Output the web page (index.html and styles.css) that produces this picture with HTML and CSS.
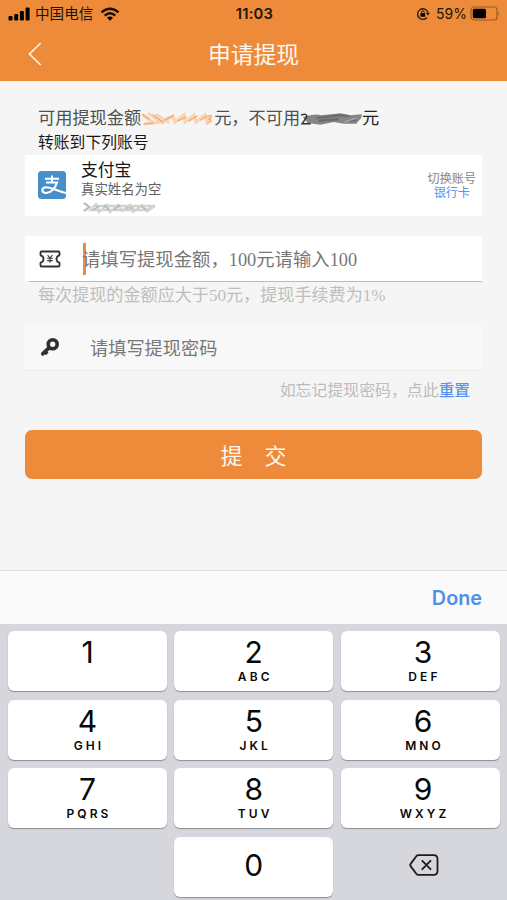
FILE: index.html
```html
<!DOCTYPE html>
<html lang="zh-CN">
<head>
<meta charset="utf-8">
<meta name="viewport" content="width=device-width, initial-scale=1">
<title>申请提现</title>
<link rel="stylesheet" href="styles.css">
</head>
<body>
<div class="screen">
  <header class="top">
    <div class="status">
      <div class="status-left">
        <svg class="signal" width="23" height="14" viewBox="0 0 23 14"><rect x="0.5" y="9" width="4" height="4.5" rx="1.2"/><rect x="6.2" y="7" width="4" height="6.5" rx="1.2"/><rect x="11.9" y="4" width="4" height="9.5" rx="1.2"/><rect x="17.6" y="0.5" width="4" height="13" rx="1.2"/></svg>
        <span class="carrier">中国电信</span>
        <svg class="wifi" width="20" height="14" viewBox="0 0 20 14"><path d="M1.5 5.3Q10-2 18.5 5.3M4.7 8.6Q10 4.1 15.3 8.6" fill="none" stroke="#170b02" stroke-width="2.4"/><path d="M7 10.7Q10 8.2 13 10.7L10 13.7Z"/></svg>
      </div>
      <span class="clock">11:03</span>
      <div class="status-right">
        <svg width="14" height="14" viewBox="0 0 14 14"><path d="M11.1 10.3A5.3 5.3 0 1 1 11.9 5.4" fill="none" stroke="#211306" stroke-width="1.3"/><path d="M9.9 5.7h3.8l-1.8 2.7z"/><rect x="4.4" y="6.2" width="4.8" height="3.6" rx=".6"/><path d="M5.4 6.5V5.3a1.4 1.4 0 0 1 2.8 0v1.2" fill="none" stroke="#211306"/></svg>
        <span class="percent">59%</span>
        <svg width="31" height="15" viewBox="0 0 31 15"><rect x="1" y="1" width="26" height="13" rx="3" fill="none" stroke="#9b5a22" stroke-width="1.2"/><rect x="2.8" y="2.8" width="13.2" height="9.4" rx="1.5"/><path d="M28.4 5.2q1.8 2.3 0 4.6z" fill="#9b5a22"/></svg>
      </div>
    </div>
    <div class="nav">
      <svg class="back" width="14" height="24" viewBox="0 0 14 24"><path d="M12.7 1L1.5 12L12.7 23"/></svg>
      <h1>申请提现</h1>
    </div>
  </header>

  <main class="form">
    <p class="balance">可用提现金额<svg class="smudge-orange" width="73" height="18" viewBox="0 0 73 18"><g fill="none" stroke-linecap="round"><path d="M2 5L13 13M8 4l14 9M16 5l11 7M4 14l15-2 13-6 2 6 9-7 1 7 9-7 2 7 9-7 2 7 4-6" stroke="#f9d3b2" stroke-width="3.2"/><path d="M2 5l6 4M12 5l10 7M24 10l8-4M37 11l8-4M48 11l8-5M60 10l6-4M3 14l9-1M67 6q5-1 1 3 5 1-1 4" stroke="#efa766" stroke-width="1.2"/></g></svg>元，不可用<svg class="smudge-gray" width="62" height="18" viewBox="0 0 64 18"><path d="M3 7Q15 3 22 5L42 3 51 5 64 4 63 8 58 14 45 14 35 12 21 15 8 13Z" fill="#858585"/><path d="M17 8l24-3 10 1M19 11l21-2M50 11l8-1" fill="none" stroke="#6b6b6b" stroke-width="2.4"/><path d="M1 5q6-2 6 1-1 3-5 8h9" fill="none" stroke="#333" stroke-width="1.5"/><path d="M46 12l12-4" stroke="#a5a5a5" stroke-width="1.6"/></svg><span class="dark">元</span></p>
    <h2>转账到下列账号</h2>

    <section class="account">
      <svg class="alipay" width="28" height="28" viewBox="0 0 28 28"><rect width="28" height="28" rx="3.5" fill="#468fcb"/><path d="M7 7.7h14M14 4.5v7M8 11.5h11C17.5 17 13 22 8.300 22c-5.500 0-5-5.800 0-5.800 5.500 0 11 4 19.700 5.800" fill="none" stroke="#fff" stroke-width="2.1"/></svg>
      <div class="account-info">
        <strong>支付宝</strong>
        <span>真实姓名为空</span>
        <svg width="80" height="13" viewBox="0 0 80 13"><path d="M3 2l5 4-5 4M8 10l7-7 3 8 8-7 3 7 8-7 4 6 8-6 3 7 9-7 4 5 9-4-9 6M12 5l62 0M10 9l58 0" fill="none" stroke="#d2d2d2" stroke-width="2.3"/><path d="M3 2l6 4-6 4M12 9l6-4M23 4l5 5M33 9l6-5M45 7h8M60 5l5 4" fill="none" stroke="#b0b0b0" stroke-width="1.1"/></svg>
      </div>
      <div class="switch"><span>切换账号</span><a>银行卡</a></div>
    </section>

    <section class="field amount">
      <svg class="ticket" width="22" height="18" viewBox="0 0 22 18"><path d="M2.5 1.5h17q1 0 1 1v2.8c-4 .7-4 6.7 0 7.4v2.8q0 1-1 1h-17q-1 0-1-1v-2.8c4-.7 4-6.7 0-7.4V2.5q0-1 1-1Z" fill="none" stroke="#333" stroke-width="1.8" stroke-linejoin="round"/><path d="M8.6 5.2L11 8l2.4-2.8M11 8v4.8M8.2 8.3h5.6M8.2 10.6h5.6" fill="none" stroke="#333" stroke-width="1.1"/></svg>
      <i class="caret"></i>
      <span class="placeholder">请填写提现金额，100元请输入100</span>
    </section>
    <div class="underline"></div>
    <p class="hint">每次提现的金额应大于50元，提现手续费为1%</p>

    <section class="field password">
      <svg class="key" width="20" height="20" viewBox="0 0 20 20"><circle cx="12.7" cy="7.2" r="4.5" fill="none" stroke="#303030" stroke-width="3.6"/><path d="M9 10.8L2.4 17M4.6 14.2l2.6 2.8M2 15.8l2 2.2" fill="none" stroke="#303030" stroke-width="3.7"/></svg>
      <span class="placeholder">请填写提现密码</span>
    </section>
    <p class="forgot">如忘记提现密码，点此<a>重置</a></p>
    <button class="submit"><span>提</span><span>交</span></button>
  </main>

  <div class="accessory"><span>Done</span></div>
  <div class="keypad">
    <div class="keycap"><b>1</b></div>
    <div class="keycap"><b>2</b><small>ABC</small></div>
    <div class="keycap right"><b>3</b><small>DEF</small></div>
    <div class="keycap"><b>4</b><small>GHI</small></div>
    <div class="keycap"><b>5</b><small>JKL</small></div>
    <div class="keycap right"><b>6</b><small>MNO</small></div>
    <div class="keycap"><b>7</b><small>PQRS</small></div>
    <div class="keycap"><b>8</b><small>TUV</small></div>
    <div class="keycap right"><b>9</b><small>WXYZ</small></div>
    <div></div>
    <div class="keycap zero"><b>0</b></div>
    <div class="erase"><svg width="30" height="22" viewBox="0 0 30 22"><path d="M9.5 1.2h15.2q3.8 0 3.8 3.8v12q0 3.8-3.8 3.8H9.5q-1.3 0-2.2-1L1.8 12.4q-1.2-1.4 0-2.8L7.3 2.2q.9-1 2.2-1ZM13.3 6.8l8.2 8.4M21.5 6.8l-8.2 8.4" fill="none" stroke="#1c1c1e" stroke-width="1.8" stroke-linejoin="round" stroke-linecap="round"/></svg></div>
  </div>
</div>
</body>
</html>
```
FILE: styles.css
```css
* { box-sizing: border-box; }
body { margin: 0; background: #f5f5f5; }
h1, h2, p { margin: 0; font-weight: 400; }
svg { display: block; flex: none; }

.screen {
  width: 507px;
  height: 900px;
  display: flex;
  flex-direction: column;
  overflow: hidden;
  font-family: "Liberation Serif", "Noto Sans CJK SC", serif;
  white-space: nowrap;
}

.top { height: 81px; background: #ed8b3a; flex: none; }
.status {
  height: 27px;
  padding: 0 6px 0 8px;
  display: grid;
  grid-template-columns: 1fr auto 1fr;
  align-items: center;
  font-family: Inter, "Noto Sans CJK SC", sans-serif;
  color: #211306;
}
.status-left, .status-right { display: flex; align-items: center; }
.status-right { justify-content: flex-end; }
.carrier { font-size: 14.6px; margin: 0 7px 0 4px; line-height: 20px; padding-top: 1px; }
.clock { font-size: 14.8px; font-weight: 600; letter-spacing: .2px; }
.percent { font-size: 14px; margin: 0 3px 0 6px; }
.nav { height: 54px; display: grid; grid-template-columns: 28px 1fr 28px; align-items: center; }
.back { margin-left: 28px; fill: none; stroke: #fff2e4; stroke-width: 1.7; }
.nav h1 { color: #fff7ef; font-size: 22.8px; line-height: 51px; padding-top: 3px; text-align: center; }

.form { height: 489px; padding: 26px 25px 0; flex: none; }
.balance {
  display: flex;
  align-items: center;
  height: 23px;
  padding-left: 13px;
  font-size: 17.2px;
  line-height: 23px;
  color: #505050;
}
.dark { color: #222; }
.form h2 { height: 25px; padding-left: 13px; font-size: 15.8px; line-height: 25px; color: #171717; }

.account { height: 61px; background: #fff; display: flex; padding: 0 6px 0 13px; }
.alipay { margin-top: 16px; }
.account-info { margin-left: 15px; display: flex; flex-direction: column; }
.account-info strong { font-size: 16.8px; line-height: 22px; height: 24px; padding-top: 5px; font-weight: 400; color: #171717; }
.account-info span { font-size: 13.4px; line-height: 22px; height: 22px; color: #606060; }
.switch { margin-left: auto; padding-top: 17px; display: flex; flex-direction: column; align-items: center; font-size: 12.1px; line-height: 14px; color: #858585; }
.switch a, .forgot a { color: #5794f1; }

.field { display: flex; align-items: center; font-size: 18.35px; }
.placeholder { color: #777; line-height: 26px; padding-top: 2px; }
.amount { height: 45px; margin-top: 20px; padding-left: 14px; background: #fff; }
.underline { height: 1px; margin-left: 4px; background: #f5ac72; }
.caret { width: 3px; height: 32px; background: #e78d43; margin-left: 22px; margin-right: -4px; }
.hint { height: 25px; padding: 1px 0 0 13px; font-size: 17.1px; line-height: 25px; color: #bebebe; }
.password { height: 47px; margin-top: 17px; padding-left: 15px; background: #f8f8f8; border-bottom: 1px solid #ebebeb; }
.password .placeholder { margin-left: 30px; font-size: 18.2px; padding-top: 4px; }
.forgot { height: 38px; padding: 1px 12px 0 0; text-align: right; font-size: 15.9px; line-height: 38px; color: #bcbcbc; }
.forgot a { font-weight: 500; font-size: 15.7px; }
.submit {
  width: 100%;
  height: 49px;
  margin: 21px 0 0;
  padding: 0 0 1px;
  border: 0;
  border-radius: 7px;
  background: #ed8b3a;
  color: #fff7ef;
  font: 22px/48px "Noto Sans CJK SC", sans-serif;
  display: flex;
  justify-content: center;
  gap: 22px;
}

.accessory {
  height: 54px;
  flex: none;
  border-top: 1px solid #dedede;
  background: #fafafa;
  display: flex;
  align-items: center;
  justify-content: flex-end;
  padding-right: 25px;
  font: 600 19.8px Inter, sans-serif;
  color: #508fe7;
}
.keypad {
  flex: 1;
  background: #d5d7dc;
  padding: 7px 7.5px 3px 8px;
  display: grid;
  grid-template-columns: repeat(3, 159px);
  grid-template-rows: repeat(4, 60px);
  gap: 8.5px 7.25px;
  font-family: Inter, sans-serif;
  color: #080808;
}
.keycap {
  display: flex;
  flex-direction: column;
  align-items: center;
  background: #fff;
  border-radius: 6px;
  box-shadow: 0 1px 1px #8c8e92;
}
.keycap.right { padding-left: 6px; }
.keycap b { font-weight: 400; font-size: 30px; line-height: 34px; margin-top: 4px; }
.keycap small { font-size: 12px; line-height: 16px; font-weight: 600; letter-spacing: 3.1px; margin-right: -3px; }
.zero b { margin-top: 11px; }
.erase { display: flex; align-items: center; justify-content: center; padding: 0 0 3px 7px; }
```
